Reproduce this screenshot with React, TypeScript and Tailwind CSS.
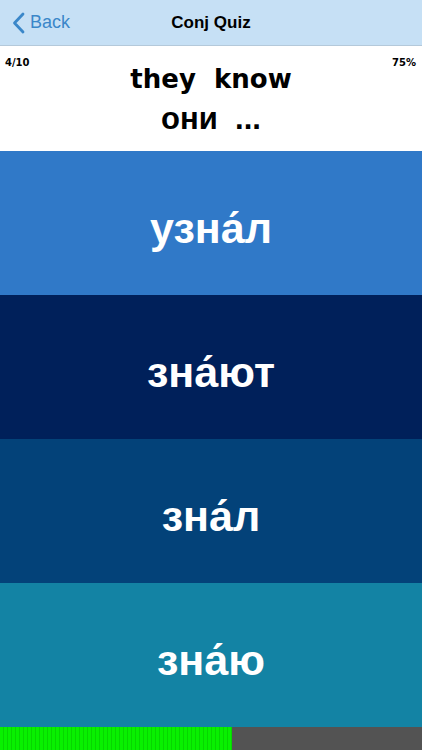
import React from "react";

const answers = [
  { text: "узна\u0301л", bg: "bg-[#3079c8]" },
  { text: "зна\u0301ют", bg: "bg-[#00205a]" },
  { text: "зна\u0301л", bg: "bg-[#034279]" },
  { text: "зна\u0301ю", bg: "bg-[#1383a4]" },
];

export default function App() {
  return (
    <div className="w-[422px] h-[750px] flex flex-col bg-white overflow-hidden" style={{ fontFamily: '"Liberation Sans", Arial, sans-serif' }}>
      <div className="h-[46px] shrink-0 bg-[#c6e0f5] border-b border-[#b4c9da] flex items-center relative">
        <div className="absolute left-[12px] top-0 h-full flex items-center gap-[5px] text-[#3a87c9]">
          <svg width="13" height="22" viewBox="0 0 13 22" fill="none">
            <path d="M11 2 L2.5 11 L11 20" stroke="#3a87c9" strokeWidth="2.8" strokeLinecap="round" strokeLinejoin="round" />
          </svg>
          <span className="text-[18px]">Back</span>
        </div>
        <div className="w-full text-center text-[17px] font-bold text-black">Conj Quiz</div>
      </div>
      <div className="h-[105px] shrink-0 relative flex flex-col items-center">
        <span className="absolute left-[5px] top-[9px] text-[10px] font-bold text-black" style={{ fontFamily: '"DejaVu Sans", sans-serif' }}>4/10</span>
        <span className="absolute right-[6px] top-[9px] text-[10px] font-bold text-black" style={{ fontFamily: '"DejaVu Sans", sans-serif' }}>75%</span>
        <div className="mt-[18px] text-[26px] font-bold leading-[30px] text-black whitespace-pre" style={{ fontFamily: '"DejaVu Sans", sans-serif' }}>they  know</div>
        <div className="mt-[7px] text-[31px] font-bold leading-[36px] text-black whitespace-pre">они  ...</div>
      </div>
      {answers.map((a, i) => (
        <div key={i} className={`h-[144px] shrink-0 ${a.bg} flex items-center justify-center pt-[10px]`}>
          <span className="text-white font-bold text-[43px] leading-[50px]">{a.text}</span>
        </div>
      ))}
      <div className="flex-1 flex bg-[#535353]">
        <div className="w-[232px] h-full bg-[repeating-linear-gradient(90deg,#08f000_0px,#08f000_3px,#06d600_3px,#06d600_4px)]" />
      </div>
    </div>
  );
}
